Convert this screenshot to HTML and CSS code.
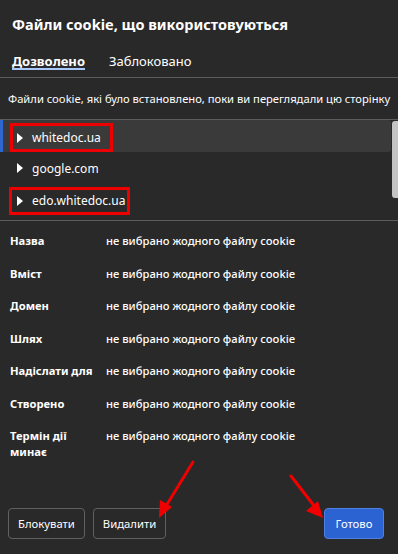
FILE: index.html
```html
<!DOCTYPE html>
<html lang="uk">
<head>
<meta charset="utf-8">
<link rel="stylesheet" href="styles.css">
</head>
<body>
<div class="dialog">
  <h1 class="title">Файли cookie, що використовуються</h1>
  <div class="tabs">
    <span class="tab active">Дозволено</span>
    <span class="tab">Заблоковано</span>
  </div>
  <p class="desc">Файли cookie, які було встановлено, поки ви переглядали цю сторінку</p>
  <div class="list">
    <div class="row selected"><span class="item marked m1"><span class="tri"></span>whitedoc.ua</span></div>
    <div class="row"><span class="item"><span class="tri"></span>google.com</span></div>
    <div class="row"><span class="item marked m2"><span class="tri"></span>edo.whitedoc.ua</span></div>
    <div class="scrollbar"></div>
  </div>
  <div class="details">
    <div class="lbl">Назва</div><div class="val">не вибрано жодного файлу cookie</div>
    <div class="lbl">Вміст</div><div class="val">не вибрано жодного файлу cookie</div>
    <div class="lbl">Домен</div><div class="val">не вибрано жодного файлу cookie</div>
    <div class="lbl">Шлях</div><div class="val">не вибрано жодного файлу cookie</div>
    <div class="lbl">Надіслати для</div><div class="val">не вибрано жодного файлу cookie</div>
    <div class="lbl">Створено</div><div class="val">не вибрано жодного файлу cookie</div>
    <div class="lbl">Термін дії минає</div><div class="val">не вибрано жодного файлу cookie</div>
  </div>
  <div class="buttons">
    <button class="btn">Блокувати</button>
    <button class="btn">Видалити</button>
    <span class="spacer"></span>
    <button class="btn primary">Готово</button>
  </div>
  <svg class="arrows" width="398" height="554" viewBox="0 0 398 554">
    <line x1="193" y1="462" x2="166" y2="506" stroke="#f00000" stroke-width="3" stroke-linecap="round"/>
    <polygon points="159,518 160,500 172,507" fill="#f00000"/>
    <line x1="291" y1="476" x2="315" y2="507" stroke="#f00000" stroke-width="3" stroke-linecap="round"/>
    <polygon points="323,518 306,511 318,501" fill="#f00000"/>
  </svg>
</div>
</body>
</html>
```
FILE: styles.css
```css
* { box-sizing: border-box; }
html, body { margin: 0; padding: 0; }
body {
  background: #292929;
  color: #e8eaed;
  font-family: "Noto Sans", "Open Sans", sans-serif;
  width: 398px;
  height: 554px;
  overflow: hidden;
}
.dialog {
  position: relative;
  height: 554px;
  display: flex;
  flex-direction: column;
}
.title {
  margin: 0;
  padding: 13px 12px 0;
  font-size: 14.5px;
  line-height: 22px;
  font-weight: 700;
  color: #ffffff;
}
.tabs {
  display: flex;
  align-items: flex-start;
  gap: 24px;
  padding: 19px 12px 0;
  height: 43px;
  border-bottom: 1px solid #5c5c5c;
}
.tab {
  font-size: 13px;
  line-height: 14px;
  height: 16px;
  color: #ffffff;
}
.tab.active {
  font-weight: 700;
  border-bottom: 2px solid #a8c7fa;
}
.desc {
  margin: 0;
  padding: 0 8px;
  height: 41px;
  display: flex;
  align-items: center;
  font-size: 11.2px;
  color: #ffffff;
  white-space: nowrap;
}
.list {
  position: relative;
  border-top: 1px solid #5c5c5c;
  border-bottom: 1px solid #5c5c5c;
  height: 102px;
}
.row {
  height: 32px;
  display: flex;
  align-items: center;
  padding-left: 10px;
  margin-right: 7px;
  font-size: 12px;
  color: #ffffff;
}
.row.selected {
  background: #3a3a3a;
  box-shadow: inset 3px 0 0 #2f66d0;
  border-radius: 0 3px 3px 0;
}
.item {
  display: inline-flex;
  align-items: center;
  height: 28px;
  padding-left: 4px;
  border: 3px solid transparent;
}
.item.marked { border-color: #ee0000; }
.m1 { width: 103px; height: 29px; margin-top: 3px; }
.m2 { width: 121px; height: 28px; margin-top: 1px; margin-left: -1px; padding-left: 5px; }
.tri {
  width: 0;
  height: 0;
  border-top: 5px solid transparent;
  border-bottom: 5px solid transparent;
  border-left: 6px solid #ffffff;
  margin-right: 9px;
}
.scrollbar {
  position: absolute;
  right: 0;
  top: 1px;
  width: 6px;
  height: 77px;
  background: #c4c4c4;
  border-radius: 3px 0 0 3px;
}
.details {
  display: grid;
  grid-template-columns: 88px 1fr;
  column-gap: 8px;
  row-gap: 16.5px;
  padding: 12px 10px 0;
  font-size: 11.2px;
  line-height: 16px;
}
.lbl { font-weight: 700; color: #ffffff; }
.val { font-weight: 500; color: #ffffff; }
.buttons {
  margin-top: auto;
  display: flex;
  gap: 8px;
  padding: 0 14px 15px 8px;
}
.spacer { flex: 1; }
.btn {
  height: 31px;
  padding: 0 9px;
  background: transparent;
  border: 1px solid #606060;
  border-radius: 4px;
  color: #ffffff;
  font-family: inherit;
  font-size: 11.3px;
}
.btn.primary {
  background: #2b63d3;
  border-color: #4f80e0;
  width: 60px;
  padding: 0;
}
.arrows {
  position: absolute;
  left: 0;
  top: 0;
  pointer-events: none;
}
```
